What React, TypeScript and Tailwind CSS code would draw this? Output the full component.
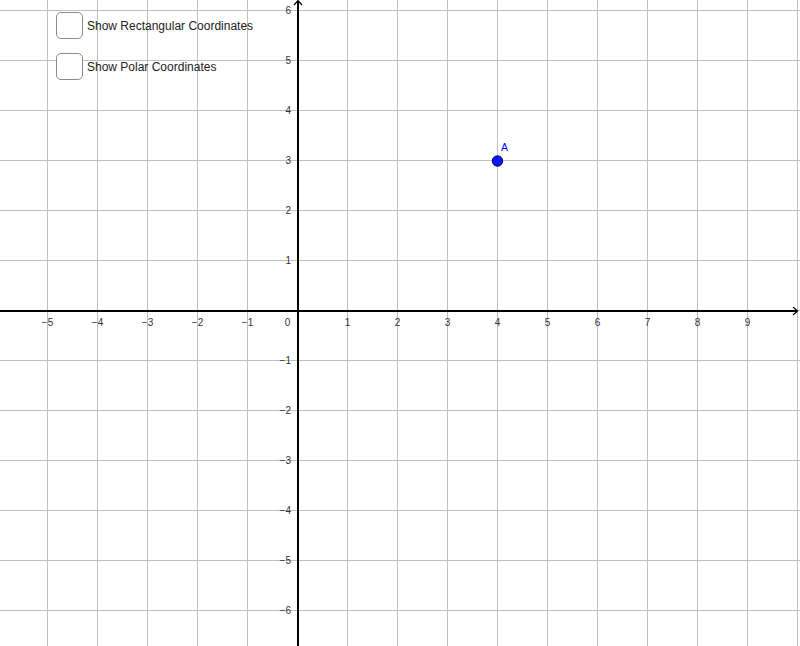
import React from 'react';

const UNIT = 50;
const OX = 298; // origin x (axis centre)
const OY = 311; // origin y

const xs = Array.from({ length: 16 }, (_, i) => i - 5); // -5..10
const ys = Array.from({ length: 13 }, (_, i) => 6 - i); // 6..-6

function fmt(n: number) {
  return n < 0 ? `\u2212${-n}` : `${n}`;
}

function Graph() {
  return (
    <svg className="absolute inset-0" width={800} height={646} viewBox="0 0 800 646">
      {/* grid */}
      {xs.map(v => (
        <line key={`gx${v}`} x1={47.5 + (v + 5) * UNIT} y1={0} x2={47.5 + (v + 5) * UNIT} y2={646} stroke="#c0c0c0" strokeWidth={1} />
      ))}
      {ys.map(v => (
        <line key={`gy${v}`} x1={0} y1={10.5 + (6 - v) * UNIT} x2={800} y2={10.5 + (6 - v) * UNIT} stroke="#c0c0c0" strokeWidth={1} />
      ))}

      {/* axes */}
      <line x1={0} y1={OY} x2={797} y2={OY} stroke="#000" strokeWidth={2} />
      <line x1={OX} y1={1} x2={OX} y2={646} stroke="#000" strokeWidth={2} />
      <polyline points="793,307 797.5,311 793,315" fill="none" stroke="#000" strokeWidth={1.2} />
      <polyline points="294,5 298,0.5 302,5" fill="none" stroke="#000" strokeWidth={1.2} />

      {/* axis labels */}
      <g fontFamily="'Liberation Sans', Arial, sans-serif" fontSize={10} fill="#333">
        {xs.filter(v => v !== 0 && v <= 9).map(v => (
          <text key={`lx${v}`} x={47.5 + (v + 5) * UNIT} y={325.5} textAnchor="middle">{fmt(v)}</text>
        ))}
        <text x={287.5} y={325.5} textAnchor="middle">0</text>
        {ys.filter(v => v !== 0).map(v => (
          <text key={`ly${v}`} x={291} y={10.5 + (6 - v) * UNIT + 3.5} textAnchor="end">{fmt(v)}</text>
        ))}
      </g>

      {/* point A */}
      <circle cx={497.5} cy={161} r={5.2} fill="#1414ff" stroke="#00006b" strokeWidth={1} />
      <text x={501} y={150.5} fontFamily="'Liberation Sans', Arial, sans-serif" fontSize={10.5} fill="#0000ff">A</text>
    </svg>
  );
}

function Check({ label }: { label: string }) {
  return (
    <div className="flex items-center h-[27px]">
      <div className="w-[27px] h-[27px] rounded-[5px] border-[1.5px] border-[#8a8a8a] bg-white" />
      <span className="ml-[4px] pt-[1px] text-[12px] text-[#222] leading-none">{label}</span>
    </div>
  );
}

export default function App() {
  return (
    <div className="relative w-[800px] h-[646px] bg-white overflow-hidden" style={{ fontFamily: "'Liberation Sans', Arial, sans-serif" }}>
      <Graph />
      <div className="absolute left-[56px] top-[12px] flex flex-col gap-[14px]">
        <Check label="Show Rectangular Coordinates" />
        <Check label="Show Polar Coordinates" />
      </div>
    </div>
  );
}
